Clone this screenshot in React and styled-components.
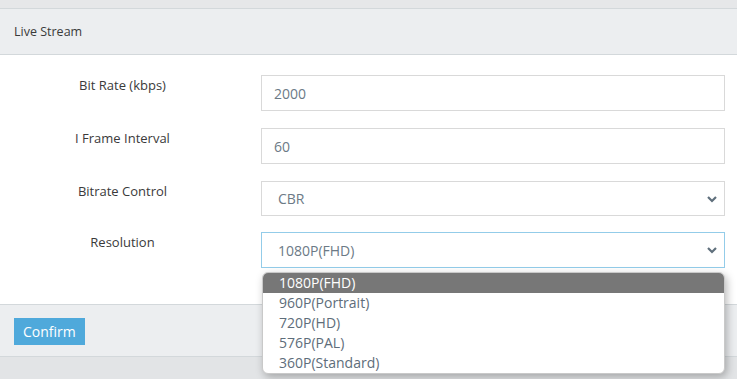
import styled, { createGlobalStyle } from "styled-components";

const GlobalStyle = createGlobalStyle`
    body {
        margin: 0;
        background: #e2e4e6;
        font-family: "Open Sans", "Noto Sans", sans-serif;
    }
`

const Page = styled.div`
    width: 737px;
    height: 379px;
    overflow: hidden;
    background: #e2e4e6;
`

const TopStrip = styled.div`
    height: 8px;
    background: #e6e7e9;
    border-bottom: 1px solid #d3d8db;
`

const Panel = styled.div`
    background: #fff;
    border-bottom: 1px solid #d3d8db;
`

const PanelHeading = styled.div`
    height: 45px;
    display: flex;
    align-items: center;
    padding-left: 14px;
    background: #eceef0;
    border-bottom: 1px solid #d3d8db;
    font-size: 12.5px;
    color: #3a3a3a;
`

const PanelBody = styled.div`
    padding: 20px 12px 36px 0;
    display: flex;
    flex-direction: column;
`

const FormRow = styled.div`
    display: grid;
    grid-template-columns: 245px 1fr;
    column-gap: 16px;
    margin-bottom: ${(p) => p.$after ?? 0}px;
`

const Label = styled.label`
    text-align: center;
    font-size: 13px;
    color: #3a3a3a;
    padding-top: 1px;
`

const TextInput = styled.input`
    box-sizing: border-box;
    width: 100%;
    height: 36px;
    border: 1px solid #d9d9d9;
    padding: 0 12px;
    font: inherit;
    font-size: 14px;
    color: #6c7a86;
    outline: none;
`

const SelectWrap = styled.div`
    position: relative;
    height: ${(p) => (p.$tall ? 36 : 35)}px;
`

const Select = styled.select`
    box-sizing: border-box;
    width: 100%;
    height: 100%;
    appearance: none;
    border: 1px solid ${(p) => (p.$focus ? "#93cce9" : "#d9d9d9")};
    background: #fff;
    padding: 0 16px;
    font: inherit;
    font-size: 14px;
    color: #6c7a86;
    outline: none;
`

const Chevron = styled.svg`
    position: absolute;
    right: 7px;
    top: 50%;
    transform: translateY(-50%);
    pointer-events: none;
`

const Options = styled.ul`
    position: absolute;
    left: 1px;
    right: 0;
    top: 40px;
    margin: 0;
    padding: 0;
    list-style: none;
    background: #fff;
    border: 1px solid #c9c9c9;
    border-radius: 6px;
    overflow: hidden;
    box-shadow: 2px 3px 8px rgba(0, 0, 0, 0.28);
    z-index: 5;
`

const Option = styled.li`
    height: 20px;
    line-height: 20px;
    padding-left: 16px;
    font-size: 14px;
    color: ${(p) => (p.$active ? "#fff" : "#5e6d7a")};
    background: ${(p) => (p.$active ? "#777" : "transparent")};
`

const Footer = styled.div`
    height: 51px;
    display: flex;
    align-items: center;
    padding-left: 14px;
    background: #eceef0;
    border-bottom: 1px solid #d3d8db;
`

const Button = styled.button`
    height: 27px;
    padding: 0 9px;
    border: none;
    background: #4fa9db;
    color: #fff;
    font: inherit;
    font-size: 14px;
    margin-top: 2px;
`

const resolutions = ["1080P(FHD)", "960P(Portrait)", "720P(HD)", "576P(PAL)", "360P(Standard)"]

const ChevronIcon = () => (
    <Chevron width="12" height="8" viewBox="0 0 12 8">
        <path d="M2 2 L6 6 L10 2" fill="none" stroke="#5f6f7c" strokeWidth="2.2" />
    </Chevron>
)

const App = () => {
    return (
        <Page>
            <GlobalStyle />
            <TopStrip />
            <Panel>
                <PanelHeading>Live Stream</PanelHeading>
                <PanelBody>
                    <FormRow $after={17}>
                        <Label htmlFor={"bitRate"}>Bit Rate (kbps)</Label>
                        <TextInput id={"bitRate"} type={"text"} defaultValue={"2000"} />
                    </FormRow>
                    <FormRow $after={17}>
                        <Label htmlFor={"iframe"}>I Frame Interval</Label>
                        <TextInput id={"iframe"} type={"text"} defaultValue={"60"} />
                    </FormRow>
                    <FormRow $after={16}>
                        <Label htmlFor={"bitrateControl"}>Bitrate Control</Label>
                        <SelectWrap>
                            <Select id={"bitrateControl"} defaultValue={"CBR"}>
                                <option>CBR</option>
                                <option>VBR</option>
                            </Select>
                            <ChevronIcon />
                        </SelectWrap>
                    </FormRow>
                    <FormRow>
                        <Label htmlFor={"resolution"}>Resolution</Label>
                        <SelectWrap $tall>
                            <Select id={"resolution"} $focus defaultValue={"1080P(FHD)"}>
                                {resolutions.map((r) => (
                                    <option key={r}>{r}</option>
                                ))}
                            </Select>
                            <ChevronIcon />
                            <Options>
                                {resolutions.map((r, i) => (
                                    <Option key={r} $active={i === 0}>{r}</Option>
                                ))}
                            </Options>
                        </SelectWrap>
                    </FormRow>
                </PanelBody>
            </Panel>
            <Footer>
                <Button>Confirm</Button>
            </Footer>
        </Page>
    )
}

export default App;
